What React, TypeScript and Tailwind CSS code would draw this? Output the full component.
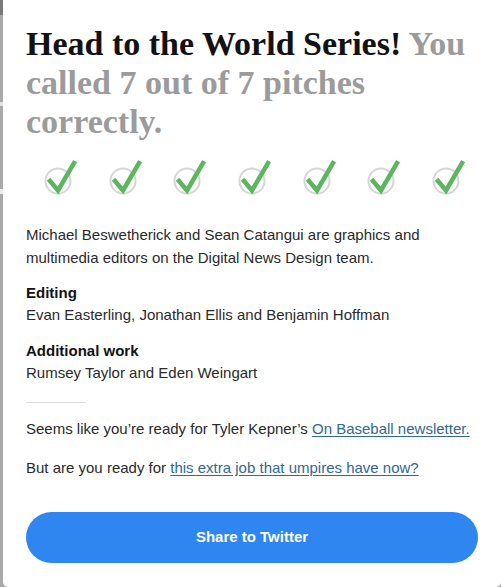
import React from 'react';

const PITCHES = 7;

// Grey check circle with a green tick that overshoots the top-right edge
const PitchCheck = () => (
  <svg width="40" height="44" viewBox="-20 -22 40 44" aria-hidden="true">
    <circle cx="0" cy="0" r="12.5" fill="none" stroke="#d6d6d6" strokeWidth="2" />
    <path
      d="M-8 0 L0 9.5 L16 -18"
      fill="none"
      stroke="#5cb55f"
      strokeWidth="4.5"
      strokeLinecap="square"
      strokeLinejoin="miter"
    />
  </svg>
);

const App = () => {
  return (
    <div className="flex h-[587px] w-[501px] overflow-hidden bg-[#a9a9a9]">
      {/* page edge peeking out behind the panel */}
      <div className="flex w-[3px] flex-col">
        <div className="h-[15px] bg-[#7b7b7b]" />
        <div className="h-[87px] bg-[#a9a9a9]" />
        <div className="h-[4px] bg-[#e2e2e2]" />
        <div className="h-[83px] bg-[#a9a9a9]" />
        <div className="h-[5px] bg-[#ebebeb]" />
        <div className="flex-1 bg-[#a9a9a9]" />
      </div>

      <div className="flex flex-1 flex-col rounded-b-[5px] bg-white px-[23px] pt-[24px] pb-[24px]">
        <h2 className="text-[34px] leading-[39px] font-bold [font-family:'Liberation_Serif',serif]">
          <span className="text-[#121212]">Head to the World Series!</span>{' '}
          <span className="text-[#9b9b9b]">You called 7 out of 7 pitches correctly.</span>
        </h2>

        <div className="mt-[18px] grid grid-cols-7">
          {Array.from({ length: PITCHES }).map((_, i) => (
            <div key={i} className="flex justify-center">
              <PitchCheck />
            </div>
          ))}
        </div>

        <div className="text-[15px] text-[#2a2a2a] [font-family:'Liberation_Sans',Arial,sans-serif]">
          <p className="mt-[20px] leading-[23px]">
            Michael Beswetherick and Sean Catangui are graphics and multimedia editors on the
            Digital News Design team.
          </p>

          <div className="mt-[13px] leading-[22px]">
            <p className="font-bold text-[#121212]">Editing</p>
            <p>Evan Easterling, Jonathan Ellis and Benjamin Hoffman</p>
          </div>

          <div className="mt-[14px] leading-[22px]">
            <p className="font-bold text-[#121212]">Additional work</p>
            <p>Rumsey Taylor and Eden Weingart</p>
          </div>

          <div className="mt-[18px] h-px w-[60px] bg-[#dcdcdc]" />

          <p className="mt-[15px] leading-[22px]">
            Seems like you’re ready for Tyler Kepner’s{' '}
            <a href="#" className="text-[#326891] underline underline-offset-2">
              On Baseball newsletter.
            </a>
          </p>

          <p className="mt-[17px] leading-[22px]">
            But are you ready for{' '}
            <a href="#" className="text-[#326891] underline underline-offset-2">
              this extra job that umpires have now?
            </a>
          </p>
        </div>

        <button
          type="button"
          className="mt-auto flex h-[51px] w-full items-center justify-center rounded-full bg-[#2f86f1] text-[15px] font-bold text-white [font-family:'Liberation_Sans',Arial,sans-serif]"
        >
          Share to Twitter
        </button>
      </div>
    </div>
  );
};

export default App;
